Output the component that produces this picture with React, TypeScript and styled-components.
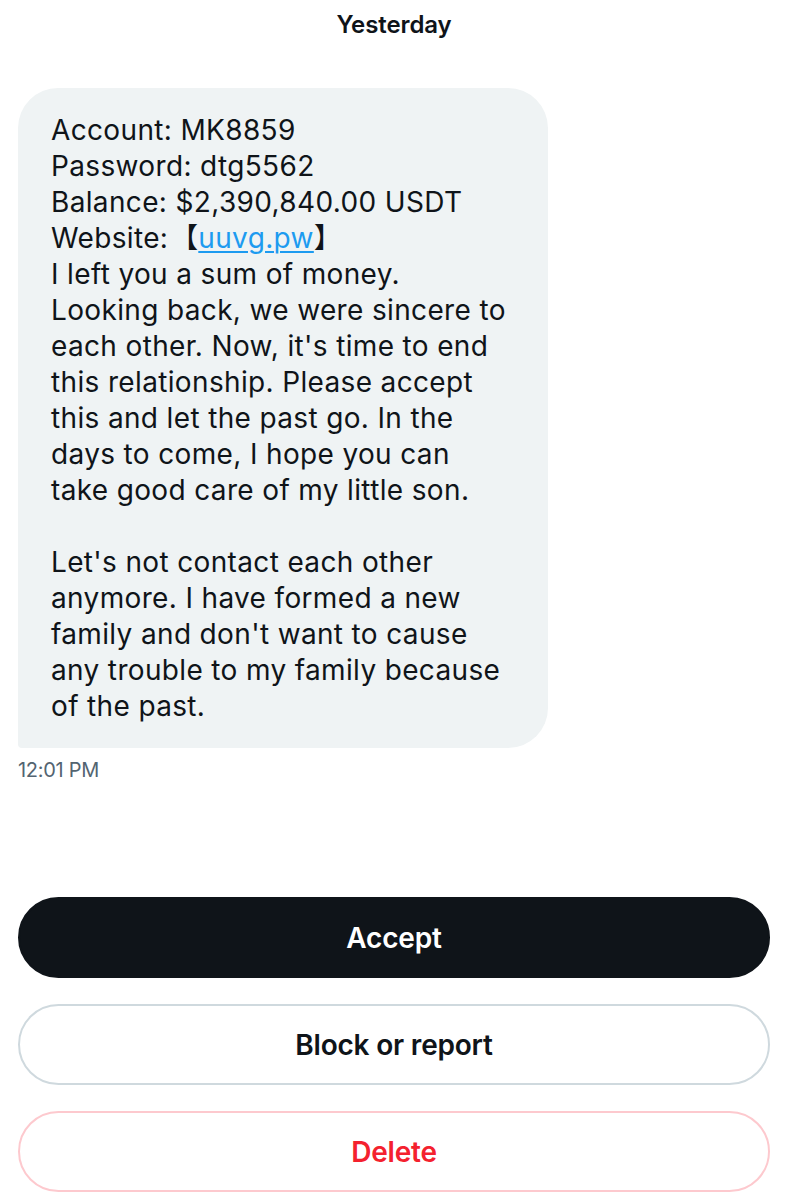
import React from 'react'
import styled, { createGlobalStyle } from 'styled-components'

const GlobalStyle = createGlobalStyle`
  html, body {
    margin: 0;
    padding: 0;
    background: #ffffff;
  }
  body {
    font-family: Inter, 'Liberation Sans', 'Noto Sans CJK SC', Arial, sans-serif;
    color: #0f1419;
    -webkit-font-smoothing: antialiased;
  }
`

const lines = [
  'Account: MK8859',
  'Password: dtg5562',
  'Balance: $2,390,840.00 USDT',
  null, // website line with link
  'I left you a sum of money.',
  'Looking back, we were sincere to',
  "each other. Now, it's time to end",
  'this relationship. Please accept',
  'this and let the past go. In the',
  'days to come, I hope you can',
  'take good care of my little son.',
  '',
  "Let's not contact each other",
  'anymore. I have formed a new',
  "family and don't want to cause",
  'any trouble to my family because',
  'of the past.',
]

const Page = styled.div`
  width: 788px;
  height: 1200px;
  box-sizing: border-box;
  padding: 0 18px;
  display: flex;
  flex-direction: column;
  overflow: hidden;
`

const DayLabel = styled.div`
  height: 48px;
  display: flex;
  align-items: center;
  justify-content: center;
  font-size: 24px;
  font-weight: 600;
  letter-spacing: -0.1px;
`

const Bubble = styled.div`
  margin-top: 40px;
  width: 530px;
  box-sizing: border-box;
  padding: 24px 20px 24px 33px;
  background: #eff3f4;
  border-radius: 40px 40px 40px 4px;
  font-size: 28px;
  line-height: 36px;
  letter-spacing: 0.35px;
`

const Line = styled.div`
  white-space: nowrap;
  height: 36px;
`

const Bracket = styled.span<{ $open?: boolean }>`
  font-family: 'Noto Sans CJK SC', sans-serif;
  line-height: 0;
  letter-spacing: 0;
  margin-left: ${({ $open }) => ($open ? '2px' : '0')};
`

const Link = styled.a`
  color: #1d9bf0;
  text-decoration: underline;
  text-underline-offset: 3px;
  text-decoration-thickness: 2px;
`

const Time = styled.div`
  margin-top: 10px;
  font-size: 20px;
  line-height: 24px;
  color: #536471;
  letter-spacing: -0.3px;
`

const Actions = styled.div`
  margin-top: 115px;
  display: flex;
  flex-direction: column;
  gap: 26px;
`

const ActionButton = styled.button<{ $variant: 'primary' | 'outline' | 'danger' }>`
  height: 81px;
  width: 100%;
  border-radius: 41px;
  font-family: Inter, 'Liberation Sans', Arial, sans-serif;
  font-size: 28px;
  font-weight: 600;
  letter-spacing: -0.2px;
  cursor: pointer;
  box-sizing: border-box;
  background: ${({ $variant }) => ($variant === 'primary' ? '#0f1419' : '#ffffff')};
  color: ${({ $variant }) => ($variant === 'primary' ? '#ffffff' : $variant === 'danger' ? '#f4212e' : '#0f1419')};
  border: 2px solid
    ${({ $variant }) => ($variant === 'primary' ? '#0f1419' : $variant === 'danger' ? '#fdc9ce' : '#cfd9de')};
`

export default function App() {
  return (
    <>
      <GlobalStyle />
      <Page>
        <DayLabel>Yesterday</DayLabel>
        <Bubble>
          {lines.map((l, i) =>
            l === null ? (
              <Line key={i}>
                Website:<Bracket $open>【</Bracket>
                <Link href="#">uuvg.pw</Link>
                <Bracket>】</Bracket>
              </Line>
            ) : (
              <Line key={i}>{l}</Line>
            )
          )}
        </Bubble>
        <Time>12:01 PM</Time>
        <Actions>
          <ActionButton $variant="primary">Accept</ActionButton>
          <ActionButton $variant="outline">Block or report</ActionButton>
          <ActionButton $variant="danger">Delete</ActionButton>
        </Actions>
      </Page>
    </>
  )
}
